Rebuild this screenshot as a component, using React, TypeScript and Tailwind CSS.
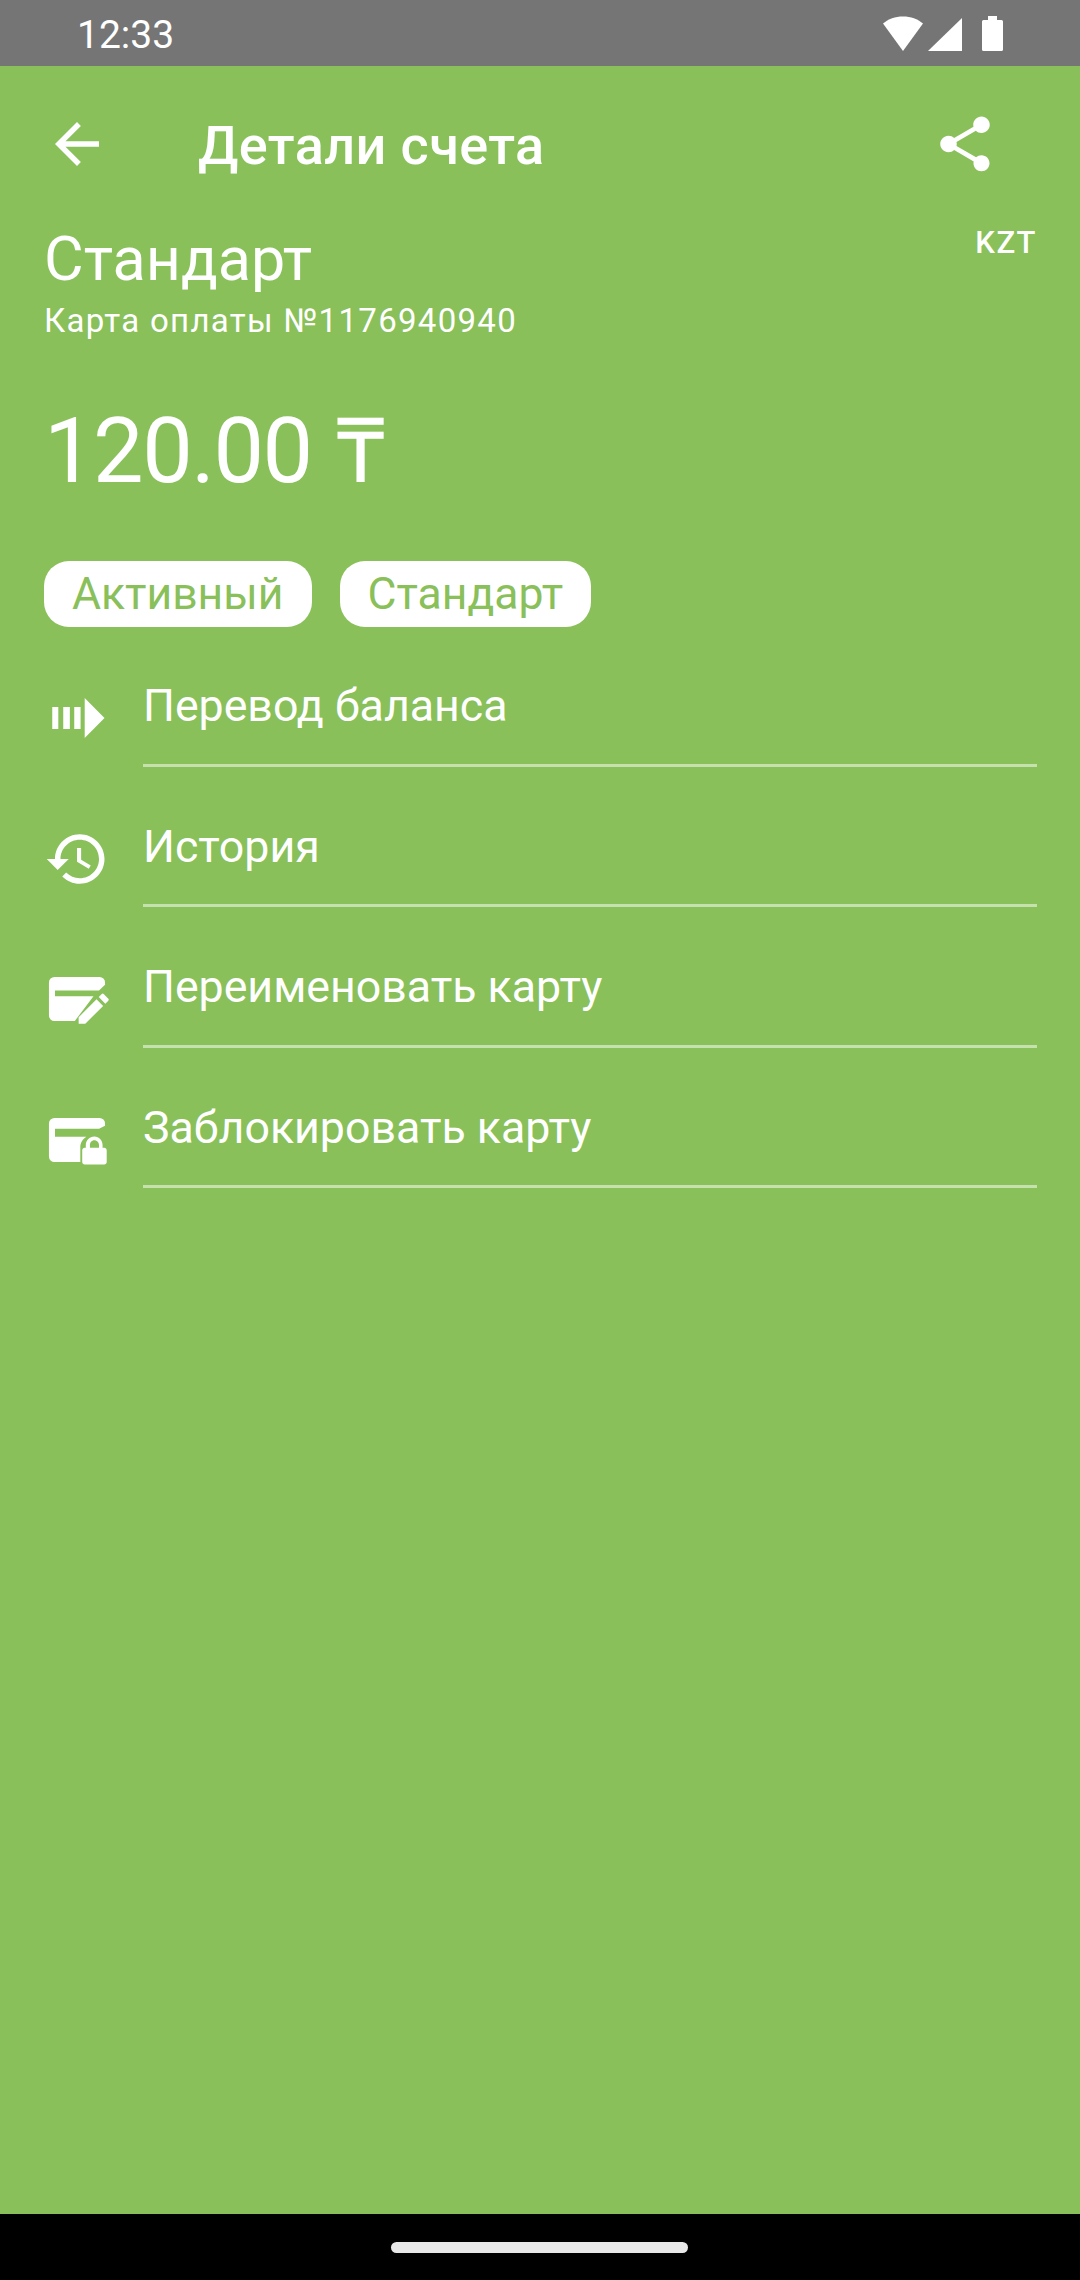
const ROWS = ["Перевод баланса", "История", "Переименовать карту", "Заблокировать карту"];

function TransferIcon() {
  return (
    <svg viewBox="0 0 24 24" className="w-[66px] h-[66px] fill-white">
      <path d="M3 8h2.200v8H3zM7 8h2.400v8H7zM11 8h2.300v8H11zM14.800 4.700 22 12l-7.200 7.300z" />
    </svg>
  );
}

function HistoryIcon() {
  return (
    <svg viewBox="0 0 24 24" className="w-[66px] h-[66px] fill-white">
      <path d="M13 3c-4.970 0-9 4.030-9 9H1l3.890 3.890.07.14L9 12H6c0-3.870 3.130-7 7-7s7 3.130 7 7-3.130 7-7 7c-1.930 0-3.680-.79-4.940-2.060l-1.420 1.420C8.270 19.990 10.510 21 13 21c4.970 0 9-4.030 9-9s-4.030-9-9-9zm-1 5v5l4.280 2.540.72-1.210-3.500-2.080V8H12z" />
    </svg>
  );
}

function CardEditIcon() {
  return (
    <svg viewBox="0 0 24 24" className="w-[66px] h-[66px] fill-white">
      <path d="M3.800 4H20.200a2 2 0 0 1 2 2v.8L20 8.900H4V11H18L11.200 20H3.800a2 2 0 0 1-2-2V6a2 2 0 0 1 2-2z" />
      <path d="M12.600 21v-2.400l6.500-6.500 2.400 2.400-6.500 6.500zM19.900 11.300l1-1a.6.6 0 0 1 .9 0l1.500 1.500a.6.6 0 0 1 0 .9l-1 1z" />
    </svg>
  );
}

function CardLockIcon() {
  return (
    <svg viewBox="0 0 24 24" className="w-[66px] h-[66px] fill-white">
      <path d="M3.800 4H20.200a2 2 0 0 1 2 2v.8L20 7.900H4v2.900h11.400c-1.300.8-2.200 2.200-2.200 3.800V20H3.800a2 2 0 0 1-2-2V6a2 2 0 0 1 2-2z" />
      <path
        fillRule="evenodd"
        d="M21.900 14.800h-.6v-1c0-1.700-1.300-3.100-3-3.100s-3.100 1.400-3.100 3.100v1h-.4c-.5 0-.9.4-.9.9V20c0 .5.4.9.9.9h7.100c.5 0 .9-.4.9-.9v-4.300c0-.5-.4-.9-.9-.9zm-1.900 0h-3.300v-1c0-.9.7-1.700 1.600-1.700s1.700.8 1.700 1.700z"
      />
    </svg>
  );
}

const ICONS = [TransferIcon, HistoryIcon, CardEditIcon, CardLockIcon];

export default function App() {
  return (
    <div className="w-[1080px] h-[2280px] flex flex-col bg-[#89c05a] text-white font-['Roboto',sans-serif] overflow-hidden">
      {/* status bar */}
      <div className="h-[66px] shrink-0 bg-[#757575] flex items-center pl-[77px] pr-[77px]">
        <span className="text-[39px] leading-none mt-[5px]">12:33</span>
        <svg viewBox="0 0 120 36" className="w-[120px] h-[36px] ml-auto mt-[1px] fill-white">
          <path d="M0 7.500C5.500 3 12 .5 20 .5S34.500 3 40 7.500L20 35z" />
          <path d="M45 35 79 2v33z" />
          <path d="M105 0h9v4h4.500a1.500 1.500 0 0 1 1.500 1.500V33.500a1.500 1.500 0 0 1-1.500 1.500H100.500a1.500 1.500 0 0 1-1.500-1.500V5.500A1.500 1.500 0 0 1 100.500 4H105z" />
        </svg>
      </div>

      <div className="flex-1">
        {/* toolbar */}
        <div className="flex items-center h-[110px] mt-[24px] pl-[44px] pr-[82px]">
          <svg viewBox="0 0 24 24" className="w-[66px] h-[66px] fill-white mt-[-2px]">
            <path d="M20 11H7.830l5.590-5.590L12 4l-8 8 8 8 1.410-1.410L7.830 13H20v-2z" />
          </svg>
          <span className="ml-[88px] mt-[2px] text-[54px] tracking-[0.4px] font-medium leading-none">Детали счета</span>
          <svg viewBox="0 0 24 24" className="w-[66px] h-[66px] fill-white ml-auto mt-[-2px]">
            <path d="M18 16.080c-.76 0-1.440.3-1.960.77L8.910 12.700c.05-.23.09-.46.09-.7s-.04-.47-.09-.7l7.050-4.110c.54.5 1.250.81 2.040.81 1.660 0 3-1.340 3-3s-1.340-3-3-3-3 1.340-3 3c0 .24.04.47.09.7L8.040 9.810C7.500 9.310 6.790 9 6 9c-1.660 0-3 1.340-3 3s1.340 3 3 3c.79 0 1.500-.31 2.040-.81l7.120 4.160c-.05.21-.08.43-.08.65 0 1.610 1.310 2.920 2.920 2.920 1.610 0 2.920-1.310 2.920-2.920s-1.310-2.920-2.920-2.920z" />
          </svg>
        </div>

        {/* account header */}
        <div className="relative pl-[44px] pr-[43px] pt-[16px]">
          <div className="text-[61px] leading-[86px]">Стандарт</div>
          <div className="text-[33px] leading-[38px] tracking-[1.3px]">Карта оплаты №1176940940</div>
          <span className="absolute right-[43px] top-[25px] text-[31px] leading-[36px] tracking-[1.5px] font-medium">KZT</span>
          <div className="text-[90px] leading-[106px] tracking-[-1.5px] [word-spacing:4px] mt-[59px]">120.00 ₸</div>
          <div className="flex gap-[28px] mt-[56px]">
            <span className="h-[66px] px-[28px] rounded-[25px] bg-white text-[#89c05a] text-[44.5px] leading-[66px]">Активный</span>
            <span className="h-[66px] px-[28px] rounded-[25px] bg-white text-[#89c05a] text-[44.5px] leading-[66px]">Стандарт</span>
          </div>
        </div>

        {/* actions */}
        <div className="mt-[-1px] pr-[43px]">
          {ROWS.map((label, i) => {
            const Icon = ICONS[i];
            return (
              <div key={label} className="flex h-[140.5px] pl-[44px]">
                <div className="pt-[59px]">
                  <Icon />
                </div>
                <div className="ml-[33px] flex-1 border-b-[3px] border-[#c5e1ae] pt-[54px] text-[44.7px] leading-[52px] self-stretch">
                  {label}
                </div>
              </div>
            );
          })}
        </div>
      </div>

      {/* nav bar */}
      <div className="h-[66px] shrink-0 bg-black flex items-center justify-center pr-[2px]">
        <div className="w-[297px] h-[11px] rounded-full bg-[#e8e8e8]" />
      </div>
    </div>
  );
}
